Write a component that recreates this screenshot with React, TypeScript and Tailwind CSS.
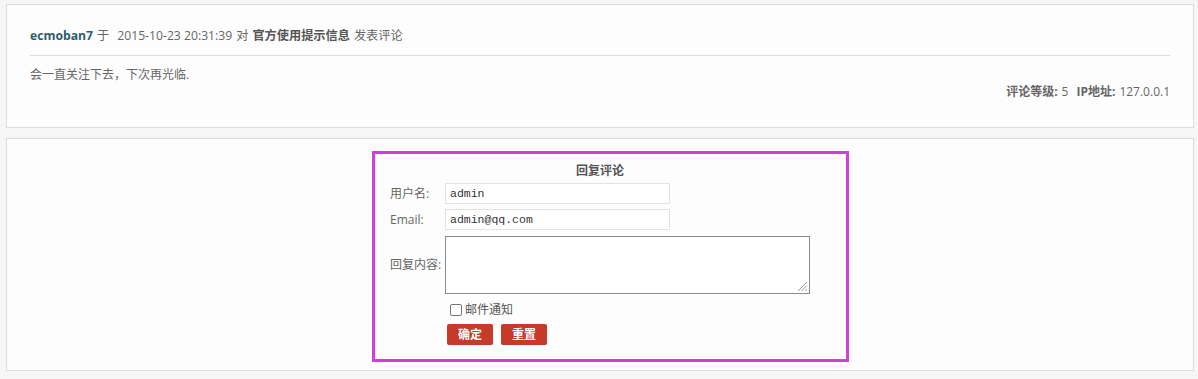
import React from "react";

export default function App() {
  const font = { fontFamily: '"Open Sans", "Noto Sans CJK SC", sans-serif' };
  return (
    <div className="min-h-[379px] w-[1198px] bg-[#f6f6f6] pl-[6px] pr-[4px] pt-[4px] text-[12px] text-[#666]" style={font}>
      {/* Comment panel */}
      <div className="h-[124px] border border-[#dcdcdc] bg-[#fdfdfd] px-[23px] pt-[21px]">
        <div className="flex h-[20px] items-center text-[12.2px] leading-[20px]">
          <span className="font-bold text-[#2b5f6c]">ecmoban7</span>
          <span className="ml-[4px]">于</span>
          <span className="ml-[8px]">2015-10-23 20:31:39</span>
          <span className="ml-[4px]">对</span>
          <span className="ml-[4px] font-bold text-[#555]">官方使用提示信息</span>
          <span className="ml-[4px]">发表评论</span>
        </div>
        <div className="mt-[9px] h-px bg-[#dcdcdc]" />
        <div className="mt-[9px] leading-[20px]">会一直关注下去，下次再光临.</div>
        <div className="-mt-[3px] flex justify-end leading-[20px]">
          <span className="font-bold">评论等级:</span>
          <span className="ml-[4px]">5</span>
          <span className="ml-[8px] font-bold">IP地址:</span>
          <span className="ml-[4px]">127.0.0.1</span>
        </div>
      </div>

      {/* Reply panel */}
      <div className="mt-[10px] h-[233px] border border-[#dcdcdc] bg-[#fdfdfd] pl-[365px] pt-[12px]">
        <div className="h-[211px] w-[477px] border-[3px] border-[#d03fd6] pl-[15px] pt-[7px]">
          <div className="pr-[36px] text-center font-bold leading-[20px] text-[#555]">回复评论</div>
          <div className="mt-[2px] grid grid-cols-[55px_1fr] items-center gap-y-[5px]">
            <div className="leading-[20px]">用户名:</div>
            <div className="flex h-[21px] w-[225px] items-center border border-[#e2e2e2] bg-white px-[4px] text-[11.5px] text-[#333]" style={{ fontFamily: '"Liberation Mono", monospace' }}>admin</div>
            <div className="leading-[20px]">Email:</div>
            <div className="flex h-[21px] w-[225px] items-center border border-[#e2e2e2] bg-white px-[4px] text-[11.5px] text-[#333]" style={{ fontFamily: '"Liberation Mono", monospace' }}>admin@qq.com</div>
            <div className="mt-[1px] leading-[20px]">回复内容:</div>
            <div className="relative mt-[1px] h-[58px] w-[365px] border border-[#8a8a8a] bg-white">
              <svg className="absolute bottom-[1px] right-[1px]" width="11" height="11" viewBox="0 0 11 11">
                <line x1="10" y1="1" x2="1" y2="10" stroke="#999" strokeWidth="1" />
                <line x1="10" y1="4.5" x2="4.5" y2="10" stroke="#999" strokeWidth="1" />
                <line x1="10" y1="8" x2="8" y2="10" stroke="#999" strokeWidth="1" />
              </svg>
            </div>
          </div>
          <div className="ml-[60px] mt-[8px] flex h-[16px] items-center">
            <span className="h-[12px] w-[12px] rounded-[2px] border border-[#777] bg-white" />
            <span className="ml-[3px] leading-[16px] text-[#555]">邮件通知</span>
          </div>
          <div className="ml-[57px] mt-[6px] flex gap-[8px]">
            <div className="flex h-[21px] w-[46px] items-center justify-center rounded-[2px] bg-[#c53a29] font-bold text-white">确定</div>
            <div className="flex h-[21px] w-[46px] items-center justify-center rounded-[2px] bg-[#c53a29] font-bold text-white">重置</div>
          </div>
        </div>
      </div>
    </div>
  );
}
